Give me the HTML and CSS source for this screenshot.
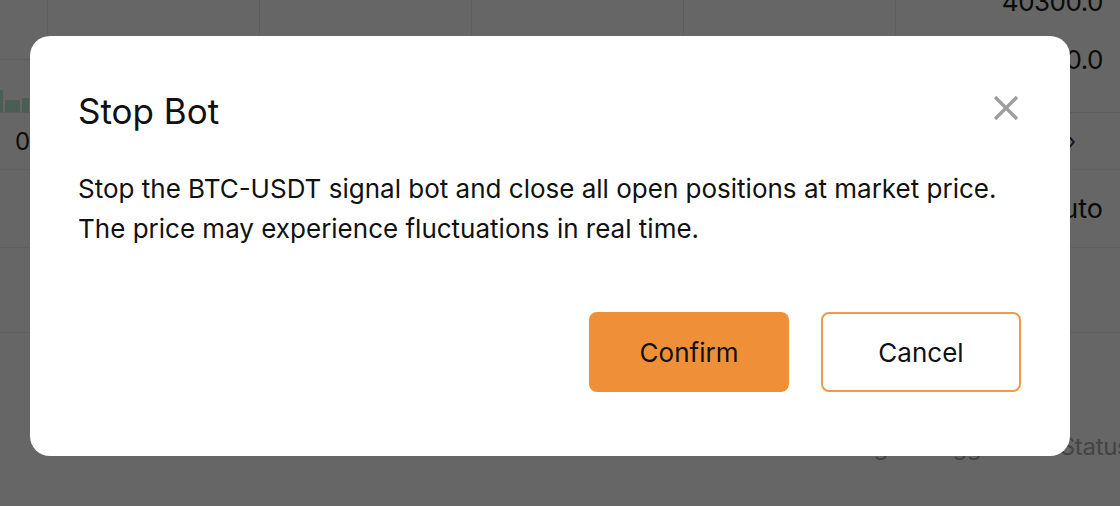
FILE: index.html
```html
<!DOCTYPE html>
<html>
<head>
	<meta charset="utf-8">
	<meta name="viewport" content="width=device-width, initial-scale=1">
	<title>Stop Bot</title>
	<link rel="stylesheet" href="styles.css">
</head>

<body>
	<div class="page">
		<div class="top">
			<div class="board">
				<div class="head">
					<div class="cell"></div>
					<div class="cell"></div>
					<div class="cell"></div>
					<div class="cell"></div>
					<div class="cell"></div>
				</div>
				<div class="chart">
					<span class="bar" style="width:3px;height:22px"></span>
					<span class="bar" style="width:15px;height:12px"></span>
					<span class="bar" style="width:7px;height:14px"></span>
				</div>
			</div>
			<div class="prices">
				<span>40300.0</span>
				<span>40250.0</span>
			</div>
		</div>
		<div class="row row-b">
			<span class="num">0</span>
			<span class="arrow">›</span>
		</div>
		<div class="row row-c">
			<span class="mode">Auto</span>
		</div>
		<div class="row row-d"></div>
		<div class="row row-e">
			<span class="label label-1">Trading</span>
			<span class="label label-2">Trigger</span>
			<span class="label label-3">Status</span>
		</div>
	</div>

	<div class="mask">
		<div class="dialog">
			<div class="dialog-head">
				<h2>Stop Bot</h2>
				<button class="close" aria-label="Close">
					<svg width="26" height="26" viewBox="0 0 26 26"><path d="M2 2L24 24M24 2L2 24" stroke="#9e9e9e" stroke-width="3.4" fill="none"/></svg>
				</button>
			</div>
			<p class="dialog-text">Stop the BTC-USDT signal bot and close all open positions at market price. The price may experience fluctuations in real time.</p>
			<div class="dialog-actions">
				<button class="btn btn-primary">Confirm</button>
				<button class="btn btn-outline">Cancel</button>
			</div>
		</div>
	</div>
</body>
</html>
```

FILE: styles.css
```css
html{font-family: "Inter", "Noto Sans", sans-serif;}
body{
	margin: 0;
	padding: 0;
	width: 1120px;
	height: 506px;
	overflow: hidden;
	background: #fff;
	color: #1a1a1a;
}

/* page behind the dialog */
.page {
  display: flex;
  flex-direction: column;
}

.top {
  display: grid;
  grid-template-columns: 896px 1fr;
  height: 113px;
  border-bottom: 1px solid #e6e6e6;
  box-sizing: border-box;
}

.head {
  display: flex;
  height: 60px;
  border-bottom: 1px solid #ebebeb;
  box-sizing: border-box;
}

.cell {
  width: 212px;
  border-right: 1px solid #ebebeb;
  box-sizing: border-box;
}

.cell:first-child {
  width: 48px;
}

.chart {
  display: flex;
  align-items: flex-end;
  gap: 2px;
  height: 52px;
}

.bar {
  display: block;
  background: #b8ead4;
}

.prices {
  display: flex;
  flex-direction: column;
  align-items: flex-end;
  padding-right: 17px;
  margin-top: -27px;
  font-size: 26px;
  line-height: 58px;
  letter-spacing: -0.5px;
}

.row {
  display: flex;
  align-items: center;
  border-bottom: 1px solid #f0f0f0;
  box-sizing: border-box;
}

.row-b {
  height: 57px;
  justify-content: space-between;
  padding: 0 44px 0 15px;
  font-size: 24px;
}

.arrow {
  font-size: 22px;
  color: #333;
}

.row-c {
  height: 78px;
  justify-content: flex-end;
  padding-right: 17px;
  font-size: 27px;
}

.row-d {
  height: 85px;
}

.row-e {
  border: 0;
  padding-top: 99px;
  font-size: 24px;
  letter-spacing: -0.3px;
  color: #aaa;
  white-space: nowrap;
}

.label-1 {
  margin-left: 804px;
}

.label-2 {
  margin-left: 36px;
}

.label-3 {
  margin-left: 56px;
}

/* dialog */
.mask {
  position: fixed;
  top: 0;
  left: 0;
  right: 0;
  bottom: 0;
  display: flex;
  padding: 36px 50px 50px 30px;
  background: rgba(0, 0, 0, 0.6);
}

.dialog {
  flex: 1;
  background: #fff;
  border-radius: 20px;
  padding: 52px 49px 64px 48px;
  color: #111;
}

.dialog-head {
  display: flex;
  justify-content: space-between;
  align-items: center;
  height: 46px;
}

.dialog-head h2 {
  margin: 0;
  font-size: 35px;
  font-weight: 400;
  line-height: 46px;
}

.close {
  display: flex;
  padding: 0;
  margin: -6px 2px 0 0;
  border: 0;
  background: none;
  cursor: pointer;
}

.dialog-text {
  margin: 35px 0 0;
  font-size: 26px;
  line-height: 40px;
}

.dialog-actions {
  display: flex;
  justify-content: flex-end;
  gap: 32px;
  margin-top: 63px;
}

.btn {
  width: 200px;
  height: 80px;
  border-radius: 8px;
  font-family: "Inter", "Noto Sans", sans-serif;
  font-size: 26px;
  color: #111;
  cursor: pointer;
  box-sizing: border-box;
}

.btn-primary {
  border: 0;
  background-color: #ef8f38;
}

.btn-outline {
  border: 2px solid #ef9a4b;
  background-color: #fff;
}
```
